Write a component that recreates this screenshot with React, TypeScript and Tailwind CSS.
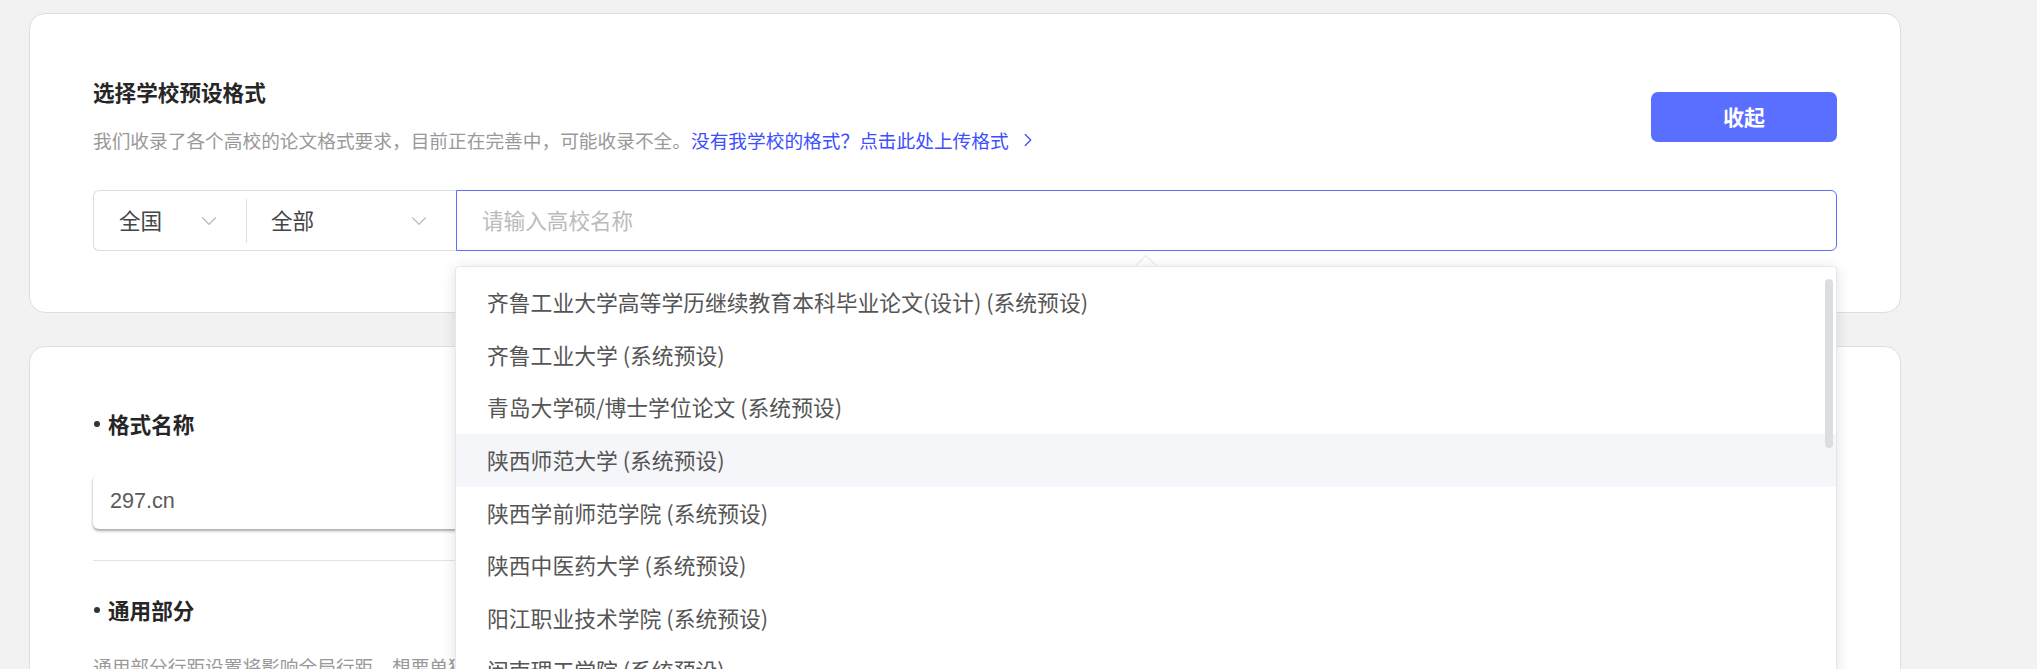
import { ChevronDown, ChevronRight } from "lucide-react";

const schools = [
  "齐鲁工业大学高等学历继续教育本科毕业论文(设计) (系统预设)",
  "齐鲁工业大学 (系统预设)",
  "青岛大学硕/博士学位论文 (系统预设)",
  "陕西师范大学 (系统预设)",
  "陕西学前师范学院 (系统预设)",
  "陕西中医药大学 (系统预设)",
  "阳江职业技术学院 (系统预设)",
  "闽南理工学院 (系统预设)",
];

const font = { fontFamily: '"Noto Sans CJK SC", "Noto Sans", sans-serif' };

const SchoolDropdown = () => (
  <div className="absolute left-[362px] top-[76px] z-20 w-[1382px]">
    <div className="absolute -top-[8px] left-[683px] h-[16px] w-[16px] rotate-45 border-l border-t border-[#e9ebf0] bg-white" />
    <div className="relative h-[430px] rounded-[4px] border border-[#e4e7ed] bg-white pt-[9px] shadow-[0_2px_14px_rgba(0,0,0,0.12)]">
      {schools.map((name, i) => (
        <div
          key={name}
          className={
            "flex h-[52.65px] items-center px-[31px] text-[21.8px] text-[#555] " +
            (i === 3 ? "bg-[#f5f6fa]" : "")
          }
        >
          {name}
        </div>
      ))}
      <div className="absolute right-[3px] top-[12px] h-[169px] w-[8px] rounded-full bg-[#dcdde0]" />
    </div>
  </div>
);

const SchoolPicker = () => (
  <div className="relative z-10 rounded-2xl border border-[#dedede] bg-white px-[63px] pb-[61px] pt-[63px]">
    <div className="flex justify-between">
      <div>
        <h2 className="text-[21.6px] font-bold leading-[30px] text-[#262626]">选择学校预设格式</h2>
        <p className="mt-[20px] flex items-center text-[18.7px] leading-[26px] text-[#999]">
          我们收录了各个高校的论文格式要求，目前正在完善中，可能收录不全。
          <a className="flex items-center text-[#3d4eff]">
            没有我学校的格式？点击此处上传格式
            <ChevronRight className="ml-[8px] h-[22px] w-[22px]" strokeWidth={1.4} />
          </a>
        </p>
      </div>
      <button className="mt-[15px] h-[50px] w-[186px] rounded-[7px] bg-[#5a6eff] text-[21px] font-bold text-white">
        收起
      </button>
    </div>

    <div className="relative mt-[37px] flex h-[61px]">
      <div className="flex w-[363px] items-center rounded-l-[6px] border border-r-0 border-[#dcdcdc] text-[21.6px] text-[#444]">
        <div className="flex h-full w-[152px] items-center justify-between pl-[25px] pr-[24px]">
          全国
          <ChevronDown className="h-[26px] w-[26px] text-[#bbb]" strokeWidth={1.1} />
        </div>
        <div className="h-[44px] w-px bg-[#e2e2e2]" />
        <div className="flex h-full flex-1 items-center justify-between pl-[24px] pr-[24px]">
          全部
          <ChevronDown className="h-[26px] w-[26px] text-[#bbb]" strokeWidth={1.1} />
        </div>
      </div>
      <div className="flex flex-1 items-center rounded-r-[6px] border-[1.5px] border-[#5b6eff] pl-[25px] text-[21.6px] text-[#bbb]">
        请输入高校名称
      </div>
      <SchoolDropdown />
    </div>
  </div>
);

const FormatCard = () => (
  <div className="mt-[33px] h-[400px] rounded-2xl border border-[#dedede] bg-white px-[63px] pt-[62px]">
    <div className="flex items-center text-[21.6px] font-bold leading-[30px] text-[#262626]">
      <span className="ml-[1px] mr-[8px] h-[6px] w-[6px] rounded-full bg-[#333]" />
      格式名称
    </div>
    <div
      className="mt-[35px] flex h-[55px] w-[1000px] items-center rounded-[6px] bg-white pl-[17px] text-[21.6px] text-[#5a5a5a] shadow-[0_2px_3px_rgba(0,0,0,0.35)]"
      style={{ fontFamily: '"Liberation Sans", Arial, sans-serif' }}
    >
      297.cn
    </div>
    <div className="mt-[31px] h-px bg-[#e4e4e4]" />
    <div className="mt-[34px] flex items-center text-[21.6px] font-bold leading-[30px] text-[#262626]">
      <span className="ml-[1px] mr-[8px] h-[6px] w-[6px] rounded-full bg-[#333]" />
      通用部分
    </div>
    <p className="mt-[28px] text-[18.7px] leading-[26px] text-[#999]">
      通用部分行距设置将影响全局行距，想要单独设置请前往对应部分进行修改。
    </p>
  </div>
);

export default function App() {
  return (
    <div className="h-[669px] overflow-hidden bg-[#f2f2f2] pl-[29px] pt-[13px]" style={font}>
      <div className="w-[1872px]">
        <SchoolPicker />
        <FormatCard />
      </div>
    </div>
  );
}
